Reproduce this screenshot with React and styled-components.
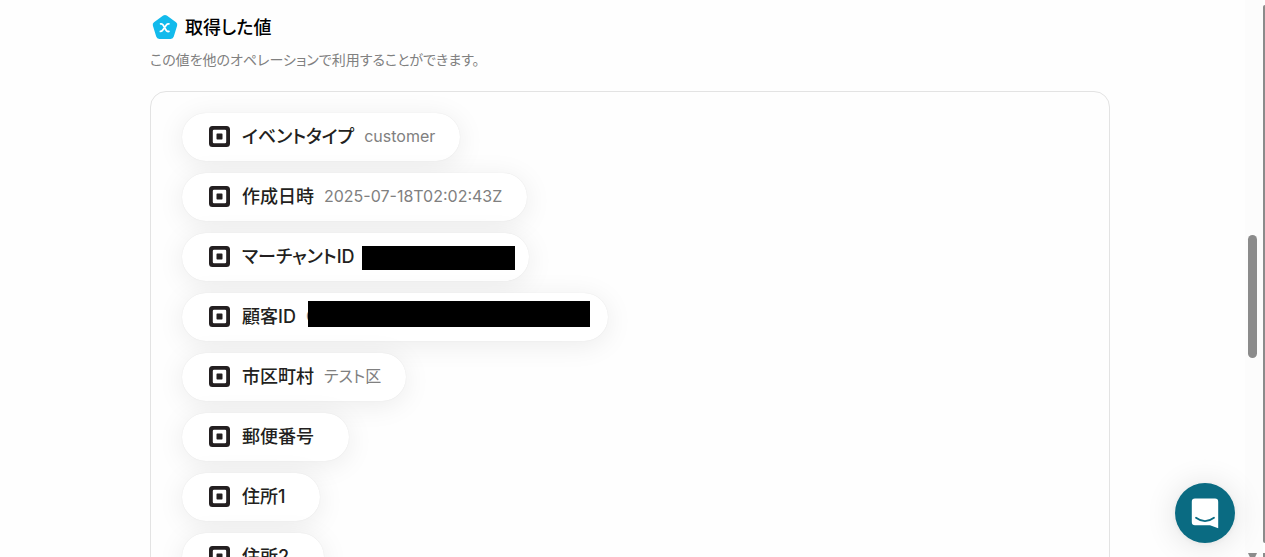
import styled, { createGlobalStyle } from 'styled-components';

const values = [
    { id: 'event', label: 'イベントタイプ', value: 'customer' },
    { id: 'created', label: '作成日時', value: '2025-07-18T02:02:43Z' },
    { id: 'merchant', label: 'マーチャントID', hidden: { width: 139, height: 24, top: 2, left: 3, right: 11 } },
    { id: 'customer', label: '顧客ID', value: 'C', hidden: { width: 277, height: 26, top: -3, left: -2, right: 7 } },
    { id: 'city', label: '市区町村', value: 'テスト区' },
    { id: 'postal', label: '郵便番号' },
    { id: 'address1', label: '住所1' },
    { id: 'address2', label: '住所2' },
];

function PentagonIcon() {
    return (
        <svg width="26" height="26" viewBox="0 0 26 26" aria-hidden="true">
            <path fill="#12baec" d="M11.2 1.6 Q13 0.3 14.8 1.6 L24 8.3 Q25.8 9.6 25.1 11.7 L21.8 22.6 Q21.1 25 18.7 25 L7.3 25 Q4.9 25 4.2 22.6 L0.9 11.7 Q0.2 9.6 2 8.3 Z" />
            <path fill="none" stroke="#fff" strokeWidth="1.8" strokeLinecap="round" strokeLinejoin="round"
                d="M8.6 9.9 Q10.2 9.5 11 10.9 L14.3 16.5 Q15.1 17.8 16.9 17.4 M16.9 9.9 Q15.4 9.7 14.4 10.9 L10.6 16.2 Q9.7 17.4 8.4 17.4" />
        </svg>
    )
}

function SquareIcon() {
    return (
        <svg width="21" height="21" viewBox="0 0 21 21" aria-hidden="true">
            <path fill="#231f20" fillRule="evenodd"
                d="M3.5 0 H17.5 A3.5 3.5 0 0 1 21 3.5 V17.5 A3.5 3.5 0 0 1 17.5 21 H3.5 A3.5 3.5 0 0 1 0 17.5 V3.5 A3.5 3.5 0 0 1 3.5 0 Z M5 3.8 A1.2 1.2 0 0 0 3.8 5 V16 A1.2 1.2 0 0 0 5 17.2 H16 A1.2 1.2 0 0 0 17.2 16 V5 A1.2 1.2 0 0 0 16 3.8 Z M8.2 7.5 H12.8 Q13.5 7.5 13.5 8.2 V12.8 Q13.5 13.5 12.8 13.5 H8.2 Q7.5 13.5 7.5 12.8 V8.2 Q7.5 7.5 8.2 7.5 Z" />
        </svg>
    )
}

function ChatIcon() {
    return (
        <svg width="28" height="31" viewBox="0 0 28 31" aria-hidden="true">
            <path fill="#fff" d="M4 0.5 H24 Q27.2 0.5 27.2 3.7 V30.2 L19 27.3 H4 Q0.8 27.3 0.8 24.1 V3.7 Q0.8 0.5 4 0.5 Z" />
            <path fill="none" stroke="#0a6b82" strokeWidth="1.8" strokeLinecap="round" d="M5 19.7 Q14 26.5 23 19.7" />
        </svg>
    )
}

function ValueItem({ label, value, hidden }) {
    return (
        <Chip>
            <SquareIcon />
            <Label>{label}</Label>
            {hidden ?
                <HiddenValue $width={hidden.width}>
                    {value}
                    <Mask $box={hidden} />
                </HiddenValue>
                :
                <Value>{value}</Value>
            }
        </Chip>
    )
}

function App() {
    return (
        <>
            <GlobalStyle />
            <Page>
                <Content>
                    <Title>
                        <PentagonIcon />
                        <h3>取得した値</h3>
                    </Title>
                    <Description>この値を他のオペレーションで利用することができます。</Description>
                    <Panel>
                        {values.map(item => (
                            <ValueItem key={item.id} label={item.label} value={item.value} hidden={item.hidden} />
                        ))}
                    </Panel>
                </Content>
            </Page>
            <ScrollTrack>
                <ScrollThumb />
                <ScrollArrow />
            </ScrollTrack>
            <OuterScroll />
            <ChatButton type="button" aria-label="チャット">
                <ChatIcon />
            </ChatButton>
        </>
    )
}

export default App;

const GlobalStyle = createGlobalStyle`
    * {
        box-sizing: border-box;
    }

    body {
        margin: 0;
        overflow: hidden;
        background: #fefefe;
        font-family: Inter, "Noto Sans CJK JP", sans-serif;
        font-feature-settings: "palt";
    }

    svg {
        display: block;
        flex-shrink: 0;
    }
`;

const Page = styled.main`
    height: 100vh;
    overflow: hidden;
    padding: 14px 20px 0 15px;
`;

const Content = styled.section`
    max-width: 960px;
    margin: 0 auto;
`;

const Title = styled.div`
    display: flex;
    align-items: center;
    gap: 7px;
    height: 26px;
    padding-left: 2px;

    h3 {
        margin: 0;
        font-size: 18px;
        line-height: 28px;
        padding-top: 2px;
        font-weight: 500;
        color: #000;
    }
`;

const Description = styled.p`
    margin: 10px 0 21px;
    font-size: 14px;
    line-height: 20px;
    color: #808080;
`;

const Panel = styled.div`
    display: flex;
    flex-direction: column;
    align-items: flex-start;
    gap: 12px;
    padding: 21px 31px;
    border: 1px solid #e3e3e3;
    border-radius: 16px;
`;

const Chip = styled.div`
    display: flex;
    align-items: center;
    height: 48px;
    padding: 0 25px 1px 27px;
    border-radius: 24px;
    background: #fff;
    box-shadow: 0 0 1px rgba(0, 0, 0, 0.1), 0 4px 28px rgba(0, 0, 0, 0.08);
    white-space: nowrap;
`;

const Label = styled.span`
    margin: 0 10px 0 12px;
    font-size: 18px;
    line-height: 25px;
    font-weight: 500;
    color: #231f20;
`;

const Value = styled.span`
    font-size: 16px;
    line-height: 25px;
    color: #808080;
`;

const HiddenValue = styled(Value)`
    position: relative;
    width: ${({ $width }) => $width}px;
    height: 25px;
`;

const Mask = styled.span`
    position: absolute;
    top: ${({ $box }) => $box.top}px;
    left: ${({ $box }) => -$box.left}px;
    right: ${({ $box }) => -$box.right}px;
    height: ${({ $box }) => $box.height}px;
    background: #000;
`;

const ScrollTrack = styled.div`
    position: fixed;
    top: 0;
    right: 2px;
    bottom: 0;
    width: 18px;
    background: #fcfcfc;
`;

const ScrollThumb = styled.div`
    position: absolute;
    top: 235px;
    left: 3px;
    width: 9px;
    height: 123px;
    border-radius: 5px;
    background: #8b8b8b;
`;

const ScrollArrow = styled.div`
    position: absolute;
    bottom: 0;
    left: 3px;
    width: 9px;
    height: 4px;
    background: #8b8b8b;
    clip-path: polygon(0 0, 100% 0, 80% 100%, 20% 100%);
`;

const OuterScroll = styled.div`
    position: fixed;
    top: 5px;
    right: 0;
    bottom: 14px;
    width: 2px;
    border-radius: 2px 0 0 2px;
    background: #8b8b8b;

    &::after {
        content: '';
        position: absolute;
        right: 0;
        bottom: -14px;
        width: 2px;
        height: 4px;
        background: #8b8b8b;
    }
`;

const ChatButton = styled.button`
    position: fixed;
    right: 30px;
    bottom: 14px;
    display: flex;
    align-items: center;
    justify-content: center;
    width: 60px;
    height: 60px;
    padding: 0;
    border: none;
    border-radius: 50%;
    background: #0a6b82;
    box-shadow: 0 1px 6px rgba(0, 0, 0, 0.06), 0 2px 32px rgba(0, 0, 0, 0.12);
    cursor: pointer;
`;
